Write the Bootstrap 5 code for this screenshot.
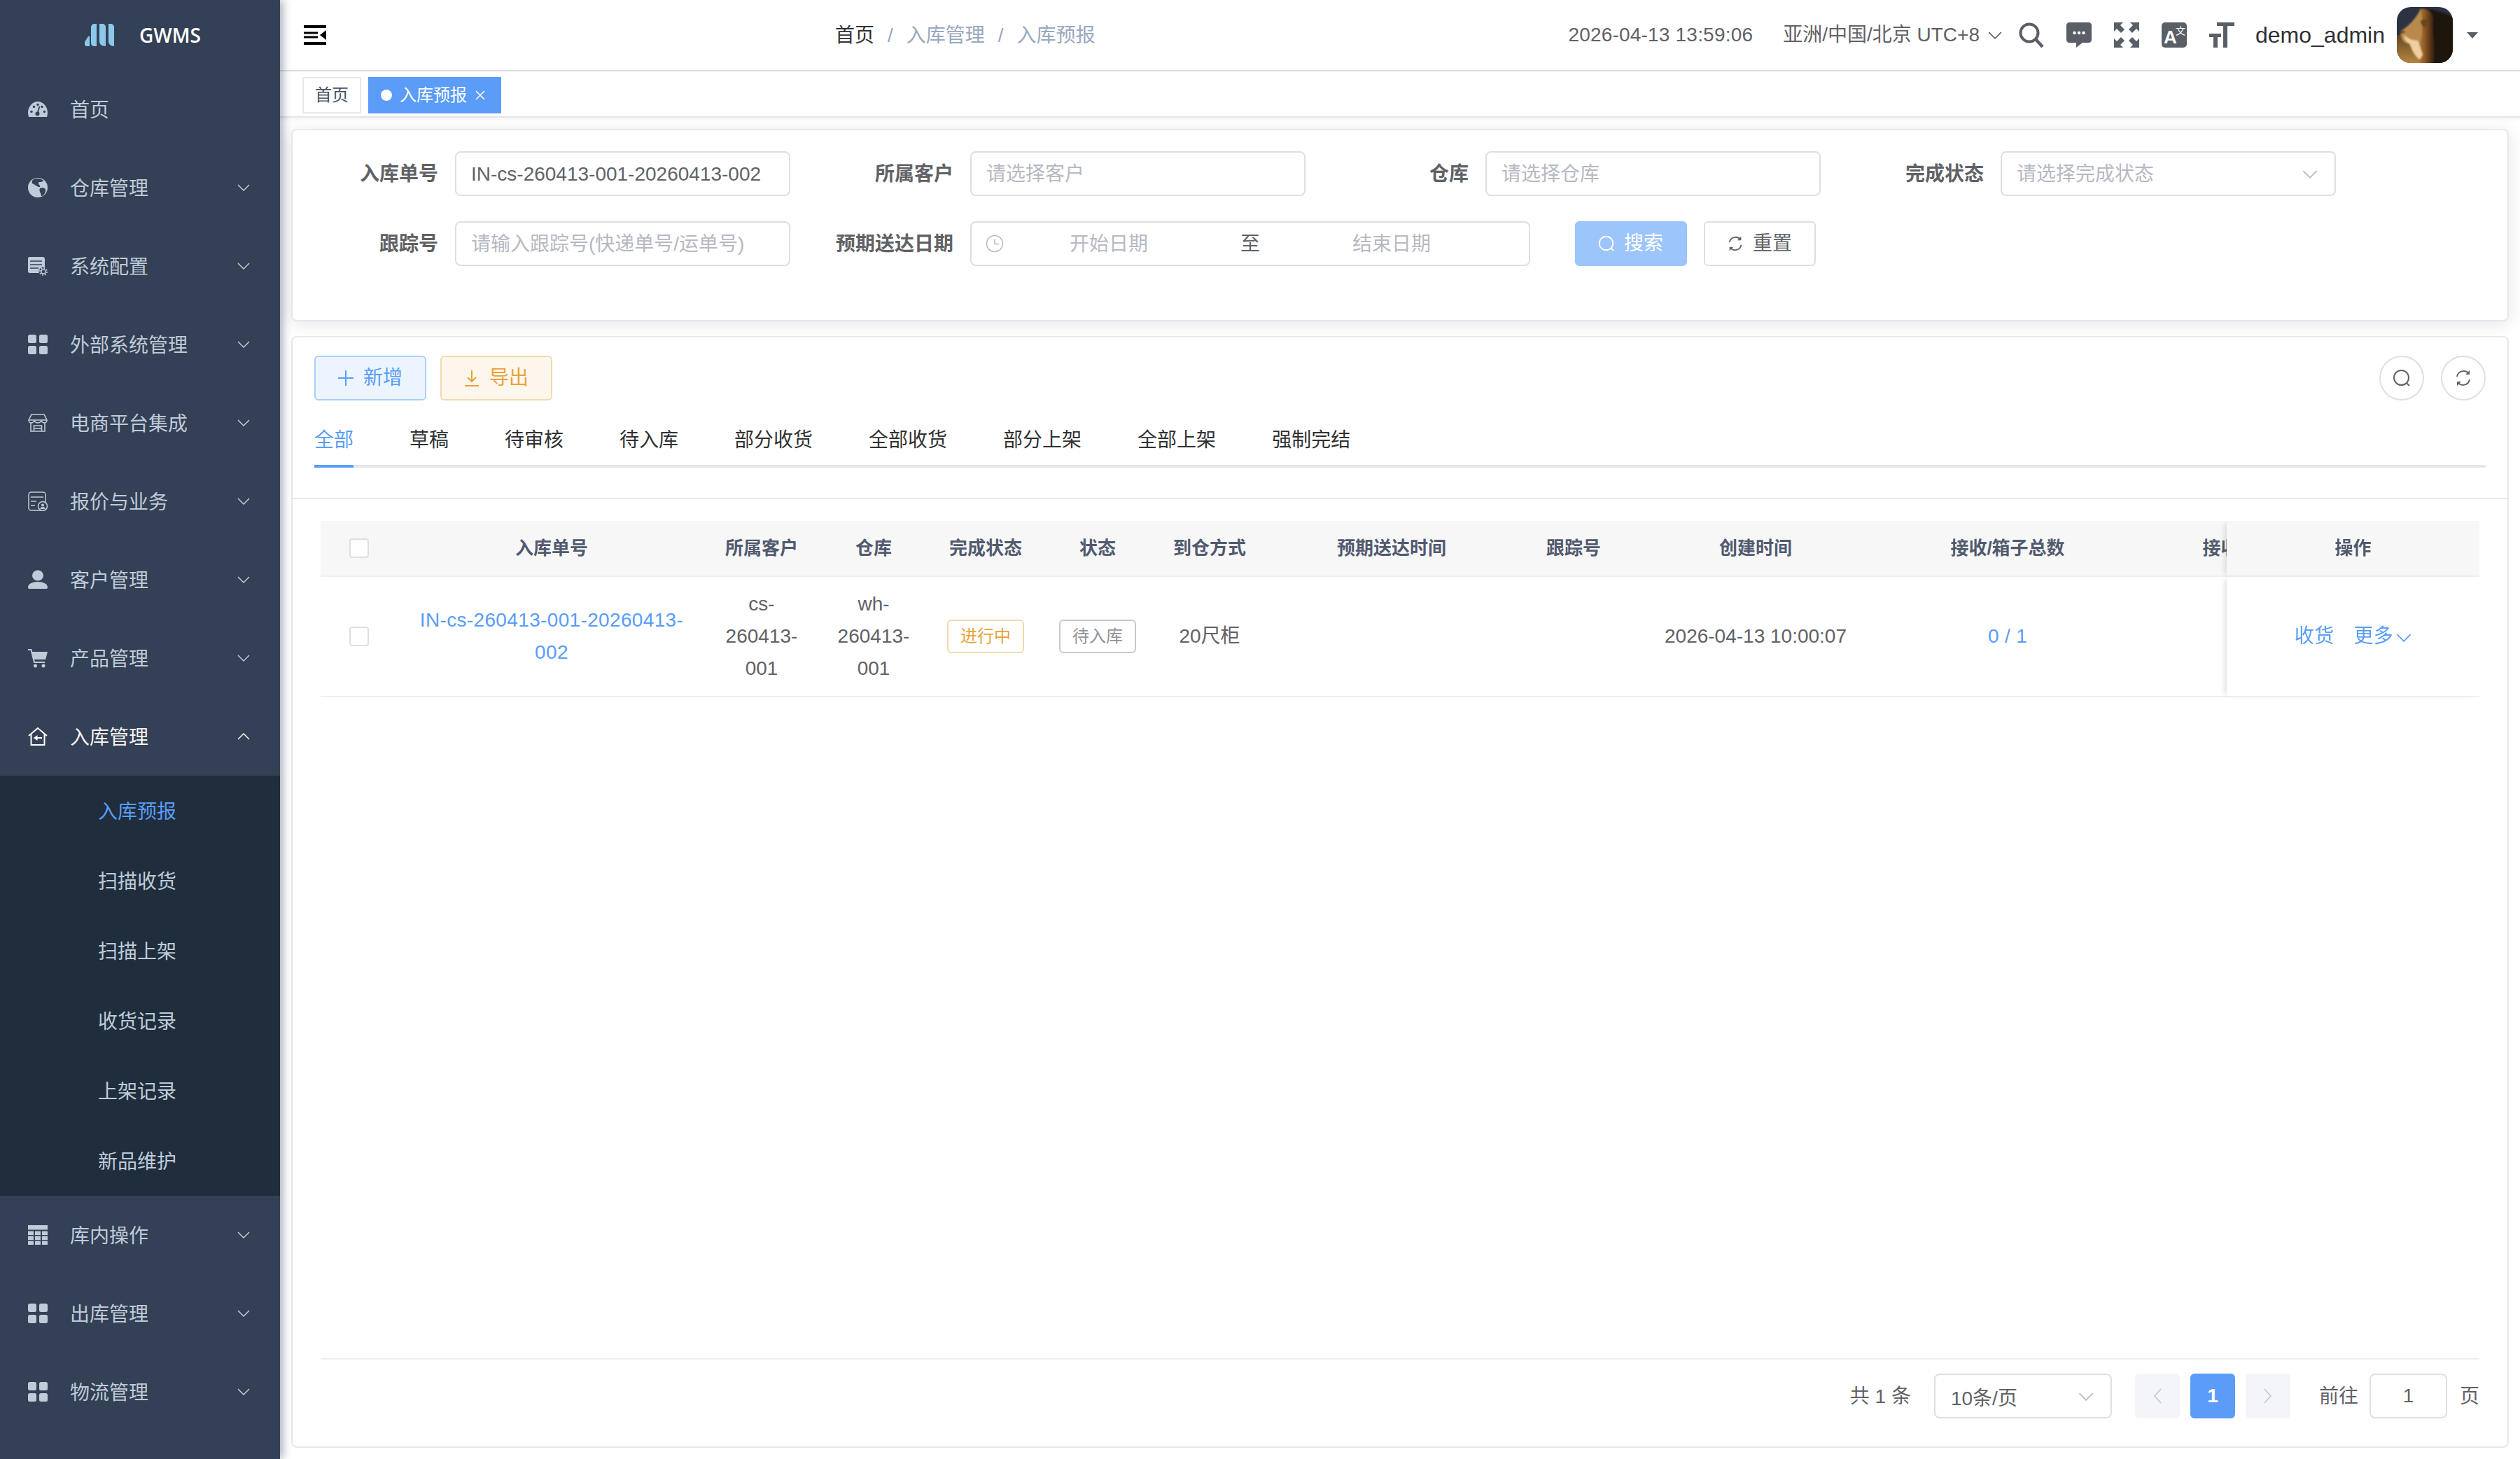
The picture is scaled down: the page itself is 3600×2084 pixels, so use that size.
<!DOCTYPE html>
<html lang="zh-CN">
<head>
    <meta charset="UTF-8">
    <meta name="viewport" content="width=device-width, initial-scale=1.0">
    <title>GWMS - 入库预报</title>
    <link href="https://cdn.jsdelivr.net/npm/bootstrap@5.3.0/dist/css/bootstrap.min.css" rel="stylesheet">
    <style>
        :root { --brand: #5a9cf8; --line: #e6e8ee; --side: #344055; --side-text: #bfcbd9; }
        html, body { height: 100%; }
        body { font-family: "Liberation Sans", "Noto Sans CJK SC", sans-serif; font-size: 28px; color: #606266; background: #fff; overflow: hidden; }

        /* sidebar */
        .side-bar { width: 400px; flex: 0 0 400px; background: var(--side); box-shadow: 4px 0 12px rgba(0, 21, 41, .35); z-index: 5; overflow: hidden; }
        .side-logo { height: 100px; padding-left: 121px; color: #fff; font-family: "Open Sans", sans-serif; font-weight: 600; font-size: 28px; }
        .side-logo svg { width: 42px; height: 32px; margin-right: 36px; }
        .side-item { height: 112px; padding: 0 43px 0 40px; color: var(--side-text); }
        .side-item span { padding-top: 3px; }
        .side-item .side-icon { width: 28px; height: 28px; margin-right: 32px; flex: none; }
        .side-item .side-arrow { width: 18px; height: 10px; margin-left: auto; }
        .side-item.is-open { color: #f4f4f5; }
        .side-sub { background: #1f2d3d; }
        .side-sub li { height: 100px; line-height: 103px; padding-left: 140px; color: var(--side-text); }
        .side-sub li.is-current { color: var(--brand); }

        /* top bar */
        .top-bar { height: 102px; flex: none; border-bottom: 2px solid #dcdfe8; padding: 0 60px 0 34px; }
        .top-burger { width: 32px; height: 28px; }
        .top-bar .breadcrumb { margin: 0 0 0 727px; padding-top: 1px; --bs-breadcrumb-divider-color: #97a8be; --bs-breadcrumb-item-padding-x: 19px; }
        .top-bar .breadcrumb-item { color: #97a8be; }
        .top-bar .breadcrumb-item:first-child { color: #303133; }
        .top-clock { margin-left: auto; letter-spacing: .2px; }
        .top-zone { margin-left: 43px; }
        .top-zone svg { width: 20px; height: 11px; margin-left: 12px; }
        .top-icons { margin-left: 24px; gap: 32px; color: #5a5e66; }
        .top-icons svg { width: 36px; height: 36px; display: block; }
        .top-user { font-size: 32px; color: #303133; margin-left: 30px; }
        .top-avatar { width: 80px; height: 80px; border-radius: 20px; margin: 0 20px 0 17px; display: block; }
        .top-caret { width: 0; height: 0; border: 8px solid transparent; border-top: 9px solid #5a5e66; border-bottom: 0; }

        /* tag strip */
        .tag-strip { height: 66px; flex: none; padding: 8px 0 0 32px; border-bottom: 2px solid #e4e5ec; box-shadow: 0 2px 6px rgba(0, 0, 0, .05); gap: 10px; }
        .tag-link { height: 52px; font-size: 24px; color: #495060; border: 2px solid var(--line); padding: 0 16px; }
        .tag-link.is-current { background: var(--brand); border-color: var(--brand); color: #fff; padding: 0 20px 0 16px; }
        .tag-dot { width: 16px; height: 16px; border-radius: 50%; background: #fff; margin-right: 11px; }
        .tag-x { width: 16px; height: 16px; margin-left: 11px; }

        /* panels */
        .panel-box { --bs-card-border-color: var(--line); --bs-card-border-width: 2px; --bs-card-border-radius: 8px; --bs-card-inner-border-radius: 6px; margin: 0 16px; }
        .filter-box { margin-top: 16px; height: 275px; flex: none; padding: 30px 0 0 24px; box-shadow: 0 4px 24px rgba(0, 0, 0, .1); }
        .filter-row { display: flex; margin-bottom: 36px; }
        .filter-cell { flex: 0 0 736px; display: flex; align-items: center; }
        .filter-cell.is-range { flex: none; }
        .filter-label { flex: 0 0 208px; padding: 2px 24px 0 0; text-align: right; font-weight: 700; margin: 0; color: #606266; }
        .filter-box .form-control, .filter-box .form-select { width: 479px; height: 64px; font-size: 28px; color: #606266; border: 2px solid #dcdfe6; border-radius: 8px; padding: 2px 21px 0; background-image: none; box-shadow: none; }
        .form-control::placeholder { color: #b6b9c2; }
        .select-wrap { position: relative; }
        .select-wrap input { cursor: default; }
        .select-wrap svg { position: absolute; right: 26px; top: 27px; width: 22px; height: 12px; color: #b6b9c2; }
        .date-range { width: 800px; height: 64px; border: 2px solid #dcdfe6; border-radius: 8px; padding-left: 20px; color: #b6b9c2; }
        .date-range svg { width: 26px; height: 26px; flex: none; }
        .date-side { width: 300px; text-align: center; padding-top: 2px; }
        .date-mid { width: 104px; text-align: center; color: #606266; padding-top: 2px; }
        .btn-find, .btn-clear, .btn-add, .btn-out { height: 64px; font-size: 28px; border-radius: 6px; padding: 0 30px; border-width: 2px; display: inline-flex; align-items: center; }
        .btn-find svg, .btn-clear svg, .btn-add svg, .btn-out svg { width: 26px; height: 26px; margin-right: 12px; }
        .btn-find { --bs-btn-color: #fff; --bs-btn-bg: #9cc5fb; --bs-btn-border-color: #9cc5fb; margin-left: 64px; width: 160px; }
        .btn-clear { --bs-btn-color: #606266; --bs-btn-bg: #fff; --bs-btn-border-color: #dcdfe6; margin-left: 24px; width: 160px; }
        .btn-add { --bs-btn-color: var(--brand); --bs-btn-bg: #ecf5ff; --bs-btn-border-color: #a9cffc; width: 160px; }
        .btn-out { --bs-btn-color: #e6a23c; --bs-btn-bg: #fdf6ec; --bs-btn-border-color: #f3d9ac; width: 160px; margin-left: 20px; }
        .btn-ring { width: 64px; height: 64px; padding: 0; border-radius: 50%; border: 2px solid #dcdfe6; background: #fff; display: flex; align-items: center; justify-content: center; color: #606266; }
        .btn-ring svg { width: 28px; height: 28px; }

        .list-box { margin-top: 21px; margin-bottom: 16px; flex: 1 1 auto; min-height: 0; }
        .list-head { padding: 26px 31px 0; border-bottom: 2px solid var(--line); height: 231px; flex: none; }
        .list-tabs { margin-top: 20px; height: 76px; border-bottom: 4px solid #e4e7ed; flex-wrap: nowrap; }
        .list-tabs .nav-link { height: 76px; line-height: 74px; padding: 0 40px; color: #303133; border-radius: 0; }
        .list-tabs li:first-child .nav-link { padding-left: 0; }
        .list-tabs .nav-link.active { color: var(--brand); padding-right: 0; margin-right: 40px; border-bottom: 4px solid var(--brand); }

        .list-body { padding: 31px 40px 0; flex: 1 1 auto; min-height: 0; }
        .grid-wrap { overflow: hidden; flex: 1 1 auto; }
        .grn-table { table-layout: fixed; width: 3311px; border-collapse: separate; border-spacing: 0; margin: 0; text-align: center; }
        .grn-table > :not(caption) > * > * { padding: 0 20px; vertical-align: middle; box-shadow: none; border-bottom: 2px solid #edeff5; background: #fff; color: #606266; line-height: 46px; }
        .grn-table > thead > tr > th { height: 80px; background: #f7f7f8; font-size: 26px; font-weight: 700; color: #515a6e; white-space: nowrap; overflow: hidden; }
        .grn-table > tbody > tr > td { height: 172px; }
        .grn-table > * > tr > .col-fixed { position: sticky; right: 0; box-shadow: -6px 0 8px -4px rgba(0, 0, 0, .14); z-index: 2; }
        .grn-table .form-check-input { width: 28px; height: 28px; margin: 0; float: none; border: 2px solid #dcdfe6; border-radius: 4px; display: block; margin: 0 auto; }
        .cell-link { color: var(--brand); text-decoration: none; letter-spacing: .35px; }
        .cell-tag { display: inline-block; height: 48px; line-height: 44px; width: 110px; font-size: 24px; border-radius: 6px; border: 2px solid; background: #fff; }
        .cell-tag.is-warn { color: #e6a23c; border-color: #f3d9ac; }
        .cell-tag.is-plain { color: #909399; border-color: #c8c9cc; }
        .cell-more svg { width: 22px; height: 12px; margin-left: 4px; }
        .cell-more { margin-left: 28px; }

        .pager-bar { border-top: 2px solid #edeff5; height: 126px; flex: none; padding-top: 20px; }
        .pager-text { line-height: 66px; }
        .pager-select { width: 254px; margin: 0 33px; }
        .pager-select input, .pager-jump { height: 64px; font-size: 28px; color: #606266; border: 2px solid #dcdfe6; border-radius: 8px; box-shadow: none; }
        .pager-select input { padding: 2px 22px 0; width: 254px; }
        .pager-bar .pagination { margin: 0 41px 0 0; gap: 16px; --bs-pagination-border-width: 0; --bs-pagination-border-radius: 6px; }
        .pager-bar .page-link { width: 64px; height: 64px; display: flex; align-items: center; justify-content: center; padding: 0; background: #f4f5f8; color: #c0c4cc; border-radius: 6px; font-size: 28px; font-weight: 700; }
        .pager-bar .page-item.active .page-link { background: var(--brand); color: #fff; }
        .pager-bar .page-link svg { width: 14px; height: 24px; }
        .pager-jump { width: 111px; text-align: center; margin: 0 18px 0 16px; padding: 0; }
    </style>
</head>
<body class="d-flex">
    <!-- shared icons -->
    <svg width="0" height="0" class="position-absolute">
        <symbol id="ic-tiles" viewBox="0 0 28 28"><rect width="12" height="12" rx="2.5" fill="currentColor"/><rect x="16" width="12" height="12" rx="2.5" fill="currentColor"/><rect y="16" width="12" height="12" rx="2.5" fill="currentColor"/><rect x="16" y="16" width="12" height="12" rx="2.5" fill="currentColor"/></symbol>
        <symbol id="ic-down" viewBox="0 0 18 10"><path d="M1 1l8 8 8-8" fill="none" stroke="currentColor" stroke-width="1.5"/></symbol>
        <symbol id="ic-glass" viewBox="0 0 28 28"><circle cx="13.5" cy="13.5" r="10.5" fill="none" stroke="currentColor" stroke-width="2"/><path d="M21 21l4 4" stroke="currentColor" stroke-width="2"/></symbol>
        <symbol id="ic-sync" viewBox="0 0 28 28"><path d="M5 12a9.5 9.5 0 0 1 17-4M23 16a9.500 9.500 0 0 1-17 4" fill="none" stroke="currentColor" stroke-width="2"/><path d="M23 3v6h-6zM5 25v-6h6z" fill="currentColor"/></symbol>
    </svg>

    <!-- left menu -->
    <aside class="side-bar d-flex flex-column">
        <div class="side-logo d-flex align-items-center">
            <svg viewBox="0 0 42 32"><path fill="#8cc8ea" d="M0 26l5-8c1-1 2-.5 2 1v13H3c-2 0-3-1.500-3-3zM9 6C9 2 11 0 14 0h3v32h-4c-2 0-4-2-4-4zM21 0h4c3 0 5 2 5 5v27c-6 0-9-3-9-7zM34 0h3c3 0 5 2 5 5v27c-5 0-8-3-8-7z"/></svg>
            <span>GWMS</span>
        </div>
        <ul class="list-unstyled m-0">
            <li class="side-item d-flex align-items-center">
                <svg class="side-icon" viewBox="0 0 28 28"><path fill="currentColor" d="M1 25C-1 19 0 12 4.500 7.500 8 4 11 3 14 3s6 1 9.500 4.500C28 12 29 19 27 25z"/><g fill="#344055"><circle cx="5" cy="17.500" r="1.700"/><circle cx="8.500" cy="10.500" r="1.700"/><circle cx="14" cy="7.500" r="1.700"/><circle cx="20" cy="10.500" r="1.700"/><circle cx="23.500" cy="17.500" r="1.700"/><circle cx="13.500" cy="20.500" r="3"/></g><path d="M13.500 20l3-10" stroke="#344055" stroke-width="1.800"/></svg>
                <span>首页</span>
            </li>
            <li class="side-item d-flex align-items-center">
                <svg class="side-icon" viewBox="0 0 28 28"><circle cx="14" cy="14" r="14" fill="currentColor"/><path fill="#344055" d="M8 2c5-2 11-1 14 2-2 3-6 1-7 3-1 3 3 3 2 6-3 1-6-3-11-5-1-2 0-5 2-6zM17 15c4-2 9 0 8 3 0 4-4 9-6 8 0-4-4-7-2-11z"/></svg>
                <span>仓库管理</span>
                <svg class="side-arrow"><use href="#ic-down"/></svg>
            </li>
            <li class="side-item d-flex align-items-center">
                <svg class="side-icon" viewBox="0 0 28 28"><path fill="currentColor" d="M2 1h19c2 0 3 1 3 3v20H3c-2 0-3-1-3-2V3c0-1 1-2 2-2z"/><path stroke="#344055" stroke-width="1.600" d="M3 7h17M3 12h17M3 17h12"/><circle cx="22" cy="22" r="6.500" fill="#344055"/><circle cx="22" cy="22" r="3" fill="none" stroke="currentColor" stroke-width="1.400"/><circle cx="22" cy="22" r="5" fill="none" stroke="currentColor" stroke-width="2" stroke-dasharray="1.800 2.100"/></svg>
                <span>系统配置</span>
                <svg class="side-arrow"><use href="#ic-down"/></svg>
            </li>
            <li class="side-item d-flex align-items-center">
                <svg class="side-icon"><use href="#ic-tiles"/></svg>
                <span>外部系统管理</span>
                <svg class="side-arrow"><use href="#ic-down"/></svg>
            </li>
            <li class="side-item d-flex align-items-center">
                <svg class="side-icon" viewBox="0 0 28 28"><g fill="none" stroke="currentColor" stroke-width="1.600"><path d="M5 2h18l4 8c0 2-1.500 4-3.500 4S20 13 19 11c-1 2-3 3-5 3s-4-1-5-3c-1 2-2.500 3-4.500 3S1 12 1 10z"/><path d="M4 14v12h20V14M8.500 26v-8h11v8M1 10h26M8.500 22h11"/></g></svg>
                <span>电商平台集成</span>
                <svg class="side-arrow"><use href="#ic-down"/></svg>
            </li>
            <li class="side-item d-flex align-items-center">
                <svg class="side-icon" viewBox="0 0 28 28"><rect x="1" y="1" width="24" height="26" rx="3.500" fill="none" stroke="currentColor" stroke-width="1.500"/><path stroke="currentColor" stroke-width="1.500" d="M4 8h18M4 14h8M4 20h6"/><circle cx="21" cy="21" r="6.500" fill="#344055" stroke="currentColor" stroke-width="1.500"/><circle cx="21" cy="19.500" r="2" fill="currentColor"/><path fill="currentColor" d="M17.500 25c0-2 1.500-3 3.500-3s3.500 1 3.500 3z"/></svg>
                <span>报价与业务</span>
                <svg class="side-arrow"><use href="#ic-down"/></svg>
            </li>
            <li class="side-item d-flex align-items-center">
                <svg class="side-icon" viewBox="0 0 28 28"><ellipse cx="14" cy="8" rx="8" ry="7.500" fill="currentColor"/><path fill="currentColor" d="M0 25c0-5 6-8 14-8s14 3 14 8c0 1.500-1 2-2 2H2c-1 0-2-.5-2-2z"/></svg>
                <span>客户管理</span>
                <svg class="side-arrow"><use href="#ic-down"/></svg>
            </li>
            <li class="side-item d-flex align-items-center">
                <svg class="side-icon" viewBox="0 0 28 28"><path fill="none" stroke="currentColor" stroke-width="2" d="M0 2h4.500L9 20h15"/><path fill="currentColor" d="M5.500 5H28l-3 11H8z"/><circle cx="10.500" cy="25" r="2.500" fill="currentColor"/><circle cx="22" cy="25" r="2.500" fill="currentColor"/></svg>
                <span>产品管理</span>
                <svg class="side-arrow"><use href="#ic-down"/></svg>
            </li>
            <li class="side-item is-open d-flex align-items-center">
                <svg class="side-icon" viewBox="0 0 28 28"><g fill="none" stroke="#fff" stroke-width="2"><path d="M1 13L14 2l13 11"/><path d="M4.500 10.500V26h19V10.500"/><path d="M20 16h-8"/></g><path fill="#fff" d="M8 16l5.500-4v8z"/></svg>
                <span>入库管理</span>
                <svg class="side-arrow" style="transform: rotate(180deg)"><use href="#ic-down"/></svg>
            </li>
            <li>
                <ul class="side-sub list-unstyled m-0">
                    <li class="is-current">入库预报</li>
                    <li>扫描收货</li>
                    <li>扫描上架</li>
                    <li>收货记录</li>
                    <li>上架记录</li>
                    <li>新品维护</li>
                </ul>
            </li>
            <li class="side-item d-flex align-items-center">
                <svg class="side-icon" viewBox="0 0 28 28"><g fill="currentColor"><rect width="28" height="6.500"/><rect y="8.500" width="8" height="5.500"/><rect x="10" y="8.500" width="8" height="5.500"/><rect x="20" y="8.500" width="8" height="5.500"/><rect y="15.500" width="8" height="5.500"/><rect x="10" y="15.500" width="8" height="5.500"/><rect x="20" y="15.500" width="8" height="5.500"/><rect y="22.500" width="8" height="5.500"/><rect x="10" y="22.500" width="8" height="5.500"/><rect x="20" y="22.500" width="8" height="5.500"/></g></svg>
                <span>库内操作</span>
                <svg class="side-arrow"><use href="#ic-down"/></svg>
            </li>
            <li class="side-item d-flex align-items-center">
                <svg class="side-icon"><use href="#ic-tiles"/></svg>
                <span>出库管理</span>
                <svg class="side-arrow"><use href="#ic-down"/></svg>
            </li>
            <li class="side-item d-flex align-items-center">
                <svg class="side-icon"><use href="#ic-tiles"/></svg>
                <span>物流管理</span>
                <svg class="side-arrow"><use href="#ic-down"/></svg>
            </li>
        </ul>
    </aside>

    <main class="flex-grow-1 d-flex flex-column" style="min-width: 0">
        <!-- top bar -->
        <header class="top-bar d-flex align-items-center">
            <svg class="top-burger" viewBox="0 0 32 28"><path fill="#000" d="M0 0h32v4H0zM0 24h32v4H0zM0 9.500h20v3H0zM0 15.500h20v3H0zM32 7v14l-9-7z"/></svg>
            <ol class="breadcrumb align-items-center">
                <li class="breadcrumb-item">首页</li>
                <li class="breadcrumb-item">入库管理</li>
                <li class="breadcrumb-item">入库预报</li>
            </ol>
            <span class="top-clock">2026-04-13 13:59:06</span>
            <span class="top-zone d-flex align-items-center">亚洲/中国/北京 UTC+8<svg><use href="#ic-down"/></svg></span>
            <div class="top-icons d-flex align-items-center">
                <svg viewBox="0 0 36 36"><circle cx="15" cy="15" r="12.500" fill="none" stroke="currentColor" stroke-width="4"/><path d="M24 24l10 11" stroke="currentColor" stroke-width="4.500"/></svg>
                <svg viewBox="0 0 36 36"><path fill="currentColor" d="M4 0h28c2 0 4 2 4 4v21c0 2-2 4-4 4H23l-9 7v-7H4c-2 0-4-2-4-4V4c0-2 2-4 4-4z"/><g fill="#fff"><circle cx="11.500" cy="15" r="2.200"/><circle cx="18" cy="15" r="2.200"/><circle cx="24.500" cy="15" r="2.200"/></g></svg>
                <svg viewBox="0 0 36 36"><path fill="currentColor" d="M0 0h13L9 4l6 6-5 5-6-6-4 4zM36 0H23l4 4-6 6 5 5 6-6 4 4zM0 36h13l-4-4 6-6-5-5-6 6-4-4zM36 36H23l4-4-6-6 5-5 6 6 4-4z"/></svg>
                <svg viewBox="0 0 36 36"><rect width="36" height="36" rx="5" fill="currentColor"/><text x="3" y="30" font-family="Liberation Sans" font-weight="700" font-size="26" fill="#fff">A</text><text x="20" y="17" font-family="Noto Sans CJK SC" font-size="14" fill="#fff">文</text></svg>
                <svg viewBox="0 0 36 36"><path fill="currentColor" d="M11 0h25v5H26v31h-6V5h-9zM0 16h17v5h-5v15H6V21H0z"/></svg>
            </div>
            <span class="top-user">demo_admin</span>
            <!-- avatar -->
            <svg class="top-avatar" viewBox="0 0 80 80">
                <defs>
                    <linearGradient id="av-ground" x1="0" y1="0" x2="0" y2="1"><stop offset="0" stop-color="#5f4722"/><stop offset="1" stop-color="#b5853f"/></linearGradient>
                    <linearGradient id="av-mane" x1="0" y1="0" x2="1" y2="0"><stop offset="0" stop-color="#d0954a"/><stop offset=".55" stop-color="#8a5522"/><stop offset="1" stop-color="#2a1a10"/></linearGradient>
                    <filter id="av-soft"><feGaussianBlur stdDeviation=".9"/></filter>
                </defs>
                <rect width="80" height="80" fill="#2b3342"/>
                <rect y="40" width="80" height="40" fill="url(#av-ground)"/>
                <g filter="url(#av-soft)">
                    <path fill="#1b130e" d="M40 3C56 4 70 8 82 16V82H44C38 60 34 30 40 3z"/>
                    <path fill="url(#av-mane)" d="M33 3C44 1 52 8 52 18 50 42 58 62 52 82H34C26 72 23 54 25 32z"/>
                    <path fill="#b98a4c" d="M33 5C26 18 17 26 12 30L5 35l1 7c2 6 4 9 9 10 6 2 11 4 14 7 6-8 8-22 7-32 1-8 0-20-3-22z"/>
                    <path fill="#efcf9f" d="M10 40c1 6 3 10 8 12 3 8 7 18 15 23l4-7c-3-8-4-14-7-20-8 0-14-3-20-8z"/>
                    <path fill="#6a4418" d="M34 20c3-4 9-3 10 1 0 4-2 7-5 8-3-2-5-5-5-9z"/>
                    <path fill="#4d3013" d="M5 35l6-1 1 2-6 2z"/>
                </g>
            </svg>
            <span class="top-caret"></span>
        </header>

        <!-- open tags -->
        <div class="tag-strip d-flex">
            <span class="tag-link d-flex align-items-center">首页</span>
            <span class="tag-link is-current d-flex align-items-center">
                <span class="tag-dot"></span>入库预报
                <svg class="tag-x" viewBox="0 0 16 16"><path d="M2 2l12 12M14 2L2 14" stroke="#fff" stroke-width="1.500"/></svg>
            </span>
        </div>

        <!-- filter form -->
        <form class="card panel-box filter-box">
            <div class="filter-row">
                <div class="filter-cell">
                    <label class="filter-label">入库单号</label>
                    <input class="form-control" value="IN-cs-260413-001-20260413-002">
                </div>
                <div class="filter-cell">
                    <label class="filter-label">所属客户</label>
                    <input class="form-control" placeholder="请选择客户">
                </div>
                <div class="filter-cell">
                    <label class="filter-label">仓库</label>
                    <input class="form-control" placeholder="请选择仓库">
                </div>
                <div class="filter-cell">
                    <label class="filter-label">完成状态</label>
                    <div class="select-wrap">
                        <input class="form-control" placeholder="请选择完成状态" readonly>
                        <svg><use href="#ic-down"/></svg>
                    </div>
                </div>
            </div>
            <div class="filter-row">
                <div class="filter-cell">
                    <label class="filter-label">跟踪号</label>
                    <input class="form-control" placeholder="请输入跟踪号(快递单号/运单号)">
                </div>
                <div class="filter-cell is-range">
                    <label class="filter-label">预期送达日期</label>
                    <div class="date-range d-flex align-items-center">
                        <svg viewBox="0 0 26 26"><circle cx="13" cy="13" r="11.500" fill="none" stroke="currentColor" stroke-width="1.500"/><path d="M13 6v7.500h6" fill="none" stroke="currentColor" stroke-width="1.500"/></svg>
                        <span class="date-side">开始日期</span>
                        <span class="date-mid">至</span>
                        <span class="date-side">结束日期</span>
                    </div>
                </div>
                <button type="button" class="btn btn-find"><svg><use href="#ic-glass"/></svg>搜索</button>
                <button type="button" class="btn btn-clear"><svg><use href="#ic-sync"/></svg>重置</button>
            </div>
        </form>

        <!-- list -->
        <section class="card panel-box list-box">
            <div class="list-head">
                <div class="d-flex">
                    <button class="btn btn-add"><svg viewBox="0 0 26 26"><path d="M13 2v22M2 13h22" stroke="currentColor" stroke-width="2"/></svg>新增</button>
                    <button class="btn btn-out"><svg viewBox="0 0 26 26"><path d="M13 2v15M7 12l6 6 6-6M3 24h20" fill="none" stroke="currentColor" stroke-width="2"/></svg>导出</button>
                    <div class="ms-auto d-flex gap-4">
                        <button class="btn-ring"><svg><use href="#ic-glass"/></svg></button>
                        <button class="btn-ring"><svg><use href="#ic-sync"/></svg></button>
                    </div>
                </div>
                <ul class="nav list-tabs">
                    <li class="nav-item"><a class="nav-link active" href="#">全部</a></li>
                    <li class="nav-item"><a class="nav-link" href="#">草稿</a></li>
                    <li class="nav-item"><a class="nav-link" href="#">待审核</a></li>
                    <li class="nav-item"><a class="nav-link" href="#">待入库</a></li>
                    <li class="nav-item"><a class="nav-link" href="#">部分收货</a></li>
                    <li class="nav-item"><a class="nav-link" href="#">全部收货</a></li>
                    <li class="nav-item"><a class="nav-link" href="#">部分上架</a></li>
                    <li class="nav-item"><a class="nav-link" href="#">全部上架</a></li>
                    <li class="nav-item"><a class="nav-link" href="#">强制完结</a></li>
                </ul>
            </div>
            <div class="list-body d-flex flex-column">
                <div class="grid-wrap">
                    <table class="table grn-table">
                        <colgroup>
                            <col style="width: 110px"><col style="width: 440px"><col style="width: 160px"><col style="width: 160px"><col style="width: 160px"><col style="width: 160px"><col style="width: 160px"><col style="width: 360px"><col style="width: 160px"><col style="width: 360px"><col style="width: 360px"><col style="width: 360px"><col style="width: 361px">
                        </colgroup>
                        <thead>
                            <tr>
                                <th><input class="form-check-input" type="checkbox"></th>
                                <th>入库单号</th>
                                <th>所属客户</th>
                                <th>仓库</th>
                                <th>完成状态</th>
                                <th>状态</th>
                                <th>到仓方式</th>
                                <th>预期送达时间</th>
                                <th>跟踪号</th>
                                <th>创建时间</th>
                                <th>接收/箱子总数</th>
                                <th>接收/上架总数</th>
                                <th class="col-fixed">操作</th>
                            </tr>
                        </thead>
                        <tbody>
                            <tr>
                                <td><input class="form-check-input" type="checkbox"></td>
                                <td><a class="cell-link" href="#">IN-cs-260413-001-20260413-002</a></td>
                                <td>cs-260413-001</td>
                                <td>wh-260413-001</td>
                                <td><span class="cell-tag is-warn">进行中</span></td>
                                <td><span class="cell-tag is-plain">待入库</span></td>
                                <td>20尺柜</td>
                                <td></td>
                                <td></td>
                                <td>2026-04-13 10:00:07</td>
                                <td><a class="cell-link" href="#">0 / 1</a></td>
                                <td><a class="cell-link" href="#">0 / 0</a></td>
                                <td class="col-fixed">
                                    <a class="cell-link" href="#">收货</a><a class="cell-link cell-more" href="#">更多<svg><use href="#ic-down"/></svg></a>
                                </td>
                            </tr>
                        </tbody>
                    </table>
                </div>
                <!-- pagination -->
                <div class="pager-bar d-flex justify-content-end align-items-start">
                    <span class="pager-text">共 1 条</span>
                    <div class="select-wrap pager-select">
                        <input class="form-control" value="10条/页" readonly>
                        <svg><use href="#ic-down"/></svg>
                    </div>
                    <ul class="pagination">
                        <li class="page-item disabled"><a class="page-link" href="#"><svg viewBox="0 0 14 24"><path d="M12 2L3 12l9 10" fill="none" stroke="currentColor" stroke-width="1.500"/></svg></a></li>
                        <li class="page-item active"><a class="page-link" href="#">1</a></li>
                        <li class="page-item disabled"><a class="page-link" href="#"><svg viewBox="0 0 14 24"><path d="M2 2l9 10-9 10" fill="none" stroke="currentColor" stroke-width="1.500"/></svg></a></li>
                    </ul>
                    <span class="pager-text">前往</span>
                    <input class="form-control pager-jump" value="1">
                    <span class="pager-text">页</span>
                </div>
            </div>
        </section>
    </main>

    <script src="https://cdn.jsdelivr.net/npm/bootstrap@5.3.0/dist/js/bootstrap.bundle.min.js"></script>
</body>
</html>
